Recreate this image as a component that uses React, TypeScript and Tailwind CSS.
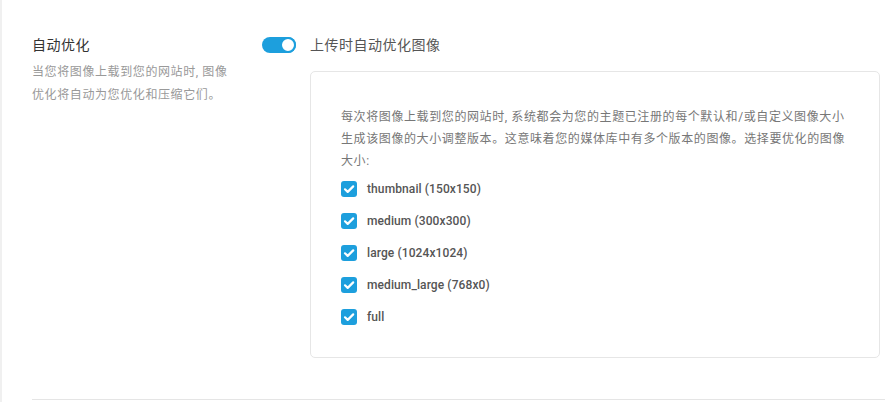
import { useState } from "react";

const SIZES = [
  "thumbnail (150x150)",
  "medium (300x300)",
  "large (1024x1024)",
  "medium_large (768x0)",
  "full",
];

const FONT = { fontFamily: "Roboto, 'Noto Sans CJK SC', sans-serif" };

function CheckIcon() {
  return (
    <svg viewBox="0 0 16 16" className="h-4 w-4">
      <rect width="16" height="16" rx="3" fill="#1d9fdd" />
      <path
        d="M4 8.3l2.7 2.6L12.2 5.4"
        fill="none"
        stroke="#fff"
        strokeWidth="2.2"
        strokeLinecap="round"
        strokeLinejoin="round"
      />
    </svg>
  );
}

export default function App() {
  const [enabled, setEnabled] = useState(true);
  const [checked, setChecked] = useState<boolean[]>(SIZES.map(() => true));

  return (
    <div
      className="min-h-[402px] w-[885px] border-l-2 border-[#f0f0f0] bg-white pt-[35px]"
      style={FONT}
    >
      <div className="flex pl-[30px] pr-[5px]">
        {/* Left column */}
        <div className="w-[230px] shrink-0">
          <h3 className="text-[14px] leading-[20px] tracking-[0.5px] text-[#333]">自动优化</h3>
          <p className="mt-[6px] w-[205px] text-[12px] leading-[23px] tracking-[0.6px] text-[#999]">
            当您将图像上载到您的网站时, 图像优化将自动为您优化和压缩它们。
          </p>
        </div>

        {/* Right column */}
        <div className="flex-1">
          <div className="flex h-[20px] items-center">
            <button
              onClick={() => setEnabled(!enabled)}
              className={`relative h-[16px] w-[34px] rounded-full ${
                enabled ? "bg-[#1d9fdd]" : "bg-[#ccc]"
              }`}
            >
              <span
                className={`absolute top-0 h-[16px] w-[16px] rounded-full border-2 border-[#1d9fdd] bg-white ${
                  enabled ? "right-0" : "left-0"
                }`}
              />
            </button>
            <span className="ml-[14px] text-[14px] tracking-[0.5px] text-[#555]">
              上传时自动优化图像
            </span>
          </div>

          <div className="ml-[48px] mt-[16px] rounded-[5px] border border-[#e6e6e6] pb-[24px] pl-[30px] pr-[26px] pt-[34px]">
            <p className="text-[12px] leading-[22px] tracking-[0.6px] text-[#777]">
              每次将图像上载到您的网站时, 系统都会为您的主题已注册的每个默认和/或自定义图像大小生成该图像的大小调整版本。这意味着您的媒体库中有多个版本的图像。选择要优化的图像大小:
            </p>
            <div className="mt-[1px]">
              {SIZES.map((size, i) => (
                <label
                  key={size}
                  className="flex h-[32px] cursor-pointer items-center"
                  onClick={() =>
                    setChecked(checked.map((c, j) => (j === i ? !c : c)))
                  }
                >
                  {checked[i] ? (
                    <CheckIcon />
                  ) : (
                    <span className="h-4 w-4 rounded-[3px] border border-[#ccc]" />
                  )}
                  <span className="ml-[10px] text-[12px] font-medium tracking-[0.1px] text-[#555]">
                    {size}
                  </span>
                </label>
              ))}
            </div>
          </div>
        </div>
      </div>

      <div className="ml-[30px] mt-[41px] border-t border-[#e5e5e5]" />
    </div>
  );
}
